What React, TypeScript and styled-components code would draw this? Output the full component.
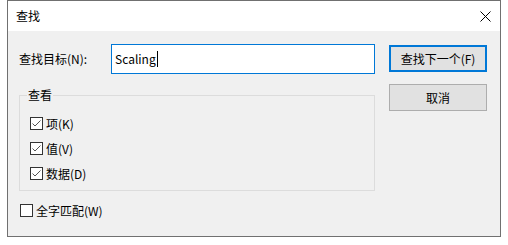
import React from "react";
import styled, { createGlobalStyle } from "styled-components";

const GlobalStyle = createGlobalStyle`
  html, body { margin: 0; padding: 0; background: #ffffff; }
  body {
    font-family: "Noto Sans CJK SC", "Noto Sans", sans-serif;
    font-size: 12px;
    color: #000;
  }
  * { box-sizing: border-box; }
`;

const Window = styled.div`
  margin-left: 7px;
  width: 494px;
  height: 237px;
  border: 1px solid #707070;
  display: flex;
  flex-direction: column;
  background: #f0f0f0;
`;

const TitleBar = styled.div`
  height: 30px;
  background: #ffffff;
  display: flex;
  align-items: center;
  justify-content: space-between;
  padding: 0 9px 0 8px;
  line-height: 16px;
`;

const Body = styled.div`
  flex: 1;
  display: flex;
  padding: 13px 12px 0 11px;
  gap: 14px;
`;

const LeftCol = styled.div`
  width: 356px;
  display: flex;
  flex-direction: column;
`;

const SearchRow = styled.div`
  display: flex;
  align-items: center;
  height: 30px;
`;

const Label = styled.span`
  width: 92px;
  line-height: 16px;
`;

const TextBox = styled.div`
  width: 264px;
  height: 30px;
  border: 1px solid #0078d7;
  background: #ffffff;
  display: flex;
  align-items: center;
  padding-left: 3px;
  line-height: 16px;
`;

const Caret = styled.span`
  display: inline-block;
  width: 1px;
  height: 16px;
  background: #000;
  margin-left: 1px;
`;

const GroupBox = styled.fieldset`
  margin: 13px 0 0 0;
  padding: 14px 0 10px 10px;
  border: 1px solid #dcdcdc;
  min-width: 0;
  display: flex;
  flex-direction: column;
  gap: 12px;
`;

const Legend = styled.legend`
  padding: 0 1px;
  margin-left: -3px;
  line-height: 16px;
`;

const CheckRow = styled.label`
  display: flex;
  align-items: center;
  height: 13px;
  gap: 3px;
  line-height: 16px;
`;

const Box = styled.span`
  width: 13px;
  height: 13px;
  border: 1px solid #333333;
  background: #ffffff;
  display: flex;
  align-items: center;
  justify-content: center;
`;

const FooterRow = styled.div`
  margin-top: 13px;
  padding-left: 1px;
`;

const ButtonCol = styled.div`
  display: flex;
  flex-direction: column;
  gap: 12px;
  padding-top: 1px;
`;

const Button = styled.div<{ $primary?: boolean }>`
  width: 98px;
  height: 27px;
  background: #e1e1e1;
  border: ${(p) => (p.$primary ? "2px solid #0078d7" : "1px solid #adadad")};
  display: flex;
  align-items: center;
  justify-content: center;
  line-height: 16px;
`;

const CheckMark = () => (
  <svg width="11" height="11" viewBox="0 0 11 11">
    <polyline points="1.5,5.5 4,8 9.5,2.5" fill="none" stroke="#555" strokeWidth="1" />
  </svg>
);

const CloseIcon = () => (
  <svg width="11" height="11" viewBox="0 0 11 11">
    <path d="M0.5 0.5 L10.5 10.5 M10.5 0.5 L0.5 10.5" stroke="#000" strokeWidth="1" />
  </svg>
);

const Check = ({ checked, label }: { checked: boolean; label: string }) => (
  <CheckRow>
    <Box>{checked && <CheckMark />}</Box>
    <span>{label}</span>
  </CheckRow>
);

export default function App() {
  return (
    <>
      <GlobalStyle />
      <Window>
        <TitleBar>
          <span>查找</span>
          <CloseIcon />
        </TitleBar>
        <Body>
          <LeftCol>
            <SearchRow>
              <Label>查找目标(N):</Label>
              <TextBox>
                <span>Scaling</span>
                <Caret />
              </TextBox>
            </SearchRow>
            <GroupBox>
              <Legend>查看</Legend>
              <Check checked label="项(K)" />
              <Check checked label="值(V)" />
              <Check checked label="数据(D)" />
            </GroupBox>
            <FooterRow>
              <Check checked={false} label="全字匹配(W)" />
            </FooterRow>
          </LeftCol>
          <ButtonCol>
            <Button $primary>查找下一个(F)</Button>
            <Button>取消</Button>
          </ButtonCol>
        </Body>
      </Window>
    </>
  );
}
